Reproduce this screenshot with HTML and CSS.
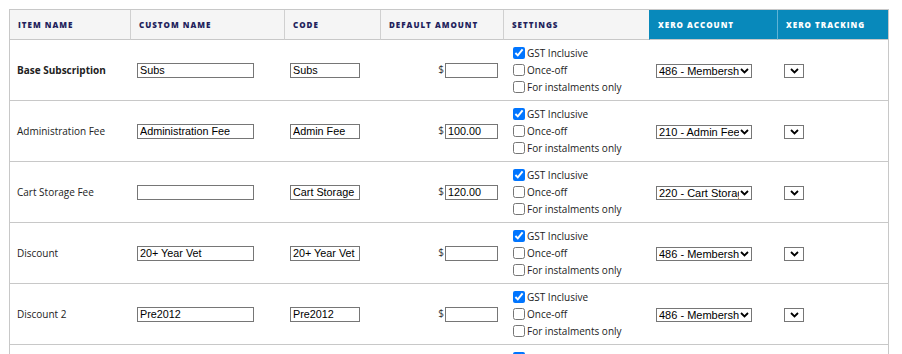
FILE: index.html
```html
<!DOCTYPE html>
<html lang="en">
<head>
    <meta charset="UTF-8">
    <meta name="viewport" content="width=device-width, initial-scale=1.0">
    <title>Fee Items</title>
    <link rel="stylesheet" href="styles.css">
</head>
<body>
    <table class="fee-table">
        <thead>
            <tr>
                <th class="col-item">Item Name</th>
                <th class="col-custom">Custom Name</th>
                <th class="col-code">Code</th>
                <th class="col-amount">Default Amount</th>
                <th class="col-settings">Settings</th>
                <th class="col-xero xero-head">Xero Account</th>
                <th class="col-track xero-head">Xero Tracking</th>
            </tr>
        </thead>
        <tbody>
            <tr>
                <td class="item-name main-item">Base Subscription</td>
                <td><input type="text" class="custom-input" value="Subs"></td>
                <td class="code-cell"><input type="text" class="code-input" value="Subs"></td>
                <td class="amount-cell">$<input type="text" class="amount-input" value=""></td>
                <td class="settings-cell">
                    <label class="opt"><input type="checkbox" checked>GST Inclusive</label>
                    <label class="opt"><input type="checkbox">Once-off</label>
                    <label class="opt"><input type="checkbox">For instalments only</label>
                </td>
                <td><select class="account-select"><option>486 - Membership Fees</option></select></td>
                <td><select class="track-select"><option></option></select></td>
            </tr>
            <tr>
                <td class="item-name">Administration Fee</td>
                <td><input type="text" class="custom-input" value="Administration Fee"></td>
                <td class="code-cell"><input type="text" class="code-input" value="Admin Fee"></td>
                <td class="amount-cell">$<input type="text" class="amount-input" value="100.00"></td>
                <td class="settings-cell">
                    <label class="opt"><input type="checkbox" checked>GST Inclusive</label>
                    <label class="opt"><input type="checkbox">Once-off</label>
                    <label class="opt"><input type="checkbox">For instalments only</label>
                </td>
                <td><select class="account-select"><option>210 - Admin Fees</option></select></td>
                <td><select class="track-select"><option></option></select></td>
            </tr>
            <tr>
                <td class="item-name">Cart Storage Fee</td>
                <td><input type="text" class="custom-input" value=""></td>
                <td class="code-cell"><input type="text" class="code-input" value="Cart Storage"></td>
                <td class="amount-cell">$<input type="text" class="amount-input" value="120.00"></td>
                <td class="settings-cell">
                    <label class="opt"><input type="checkbox" checked>GST Inclusive</label>
                    <label class="opt"><input type="checkbox">Once-off</label>
                    <label class="opt"><input type="checkbox">For instalments only</label>
                </td>
                <td><select class="account-select"><option>220 - Cart Storage</option></select></td>
                <td><select class="track-select"><option></option></select></td>
            </tr>
            <tr>
                <td class="item-name">Discount</td>
                <td><input type="text" class="custom-input" value="20+ Year Vet"></td>
                <td class="code-cell"><input type="text" class="code-input" value="20+ Year Vet"></td>
                <td class="amount-cell">$<input type="text" class="amount-input" value=""></td>
                <td class="settings-cell">
                    <label class="opt"><input type="checkbox" checked>GST Inclusive</label>
                    <label class="opt"><input type="checkbox">Once-off</label>
                    <label class="opt"><input type="checkbox">For instalments only</label>
                </td>
                <td><select class="account-select"><option>486 - Membership Fees</option></select></td>
                <td><select class="track-select"><option></option></select></td>
            </tr>
            <tr>
                <td class="item-name">Discount 2</td>
                <td><input type="text" class="custom-input" value="Pre2012"></td>
                <td class="code-cell"><input type="text" class="code-input" value="Pre2012"></td>
                <td class="amount-cell">$<input type="text" class="amount-input" value=""></td>
                <td class="settings-cell">
                    <label class="opt"><input type="checkbox" checked>GST Inclusive</label>
                    <label class="opt"><input type="checkbox">Once-off</label>
                    <label class="opt"><input type="checkbox">For instalments only</label>
                </td>
                <td><select class="account-select"><option>486 - Membership Fees</option></select></td>
                <td><select class="track-select"><option></option></select></td>
            </tr>
            <tr>
                <td class="item-name">Discount 3</td>
                <td><input type="text" class="custom-input" value=""></td>
                <td class="code-cell"><input type="text" class="code-input" value=""></td>
                <td class="amount-cell">$<input type="text" class="amount-input" value=""></td>
                <td class="settings-cell">
                    <label class="opt"><input type="checkbox" checked>GST Inclusive</label>
                    <label class="opt"><input type="checkbox">Once-off</label>
                    <label class="opt"><input type="checkbox">For instalments only</label>
                </td>
                <td><select class="account-select"><option>486 - Membership Fees</option></select></td>
                <td><select class="track-select"><option></option></select></td>
            </tr>
        </tbody>
    </table>
</body>
</html>
```

FILE: styles.css
```css
* {
    box-sizing: border-box;
}

html, body {
    overflow: hidden;
}

body {
    margin: 0;
    padding: 9px 0 0 9px;
    background: #fff;
    font-family: "Open Sans", Arial, sans-serif;
    font-size: 10px;
    color: #222;
}

.fee-table {
    border-collapse: separate;
    border-spacing: 0;
    table-layout: fixed;
    width: 880px;
    border: 1px solid #c8c8c8;
    border-bottom: none;
}

.fee-table th {
    height: 30px;
    padding: 0 0 0 8px;
    background: #f5f5f5;
    color: #231f5c;
    font-size: 8px;
    font-weight: 800;
    letter-spacing: 1px;
    text-transform: uppercase;
    text-align: left;
    border-right: 1px solid #d0d0d0;
    border-bottom: 1px solid #c8c8c8;
}

.fee-table th.xero-head {
    background: #0889bb;
    color: #fff;
    border-right-color: #5fb3d6;
}

.fee-table th.col-settings {
    border-right-color: #0889bb;
}

.fee-table th.col-track {
    border-right: none;
}

.col-item { width: 121px; }
.col-custom { width: 154px; }
.col-code { width: 96px; }
.col-amount { width: 123px; }
.col-settings { width: 146px; }
.col-xero { width: 128px; }
.col-track { width: 110px; }

.fee-table td {
    height: 61px;
    padding: 0 0 0 6px;
    vertical-align: middle;
    border-bottom: 1px solid #c8c8c8;
}

.fee-table td.item-name {
    padding-left: 7px;
}

.fee-table td.code-cell {
    padding-left: 5px;
}

.main-item {
    font-weight: 700;
}

input[type="text"] {
    height: 15px;
    padding: 0 2px;
    border: 1px solid #767676;
    border-radius: 0;
    font-family: "Liberation Sans", Arial, sans-serif;
    font-size: 10.8px;
    color: #000;
    vertical-align: middle;
}

.custom-input {
    width: 117px;
}

.code-input {
    width: 70px;
}

.fee-table td.amount-cell {
    text-align: right;
    padding-right: 6px;
    font-size: 10px;
    color: #333;
}

.amount-input {
    width: 53px;
    margin-left: 1px;
    text-align: left;
}

.fee-table td.settings-cell {
    padding: 4px 0 5px 9px;
}

.opt {
    display: flex;
    align-items: center;
    height: 17px;
    white-space: nowrap;
    color: #222;
}

.opt input {
    width: 12px;
    height: 12px;
    margin: 0 2px 0 0;
}

select {
    appearance: none;
    -webkit-appearance: none;
    height: 14px;
    padding: 0 12px 0 2px;
    border: 1px solid #767676;
    border-radius: 0;
    background: #fff url("data:image/svg+xml;utf8,<svg xmlns='http://www.w3.org/2000/svg' width='9' height='6' viewBox='0 0 9 6'><path d='M1 1l3.5 3.5L8 1' fill='none' stroke='black' stroke-width='1.8'/></svg>") no-repeat right 2px center;
    font-family: "Liberation Sans", Arial, sans-serif;
    font-size: 11px;
    line-height: 12px;
    color: #000;
    vertical-align: middle;
}

.account-select {
    width: 96px;
}

.track-select {
    width: 20px;
    padding: 0;
    background-position: center;
}
```
